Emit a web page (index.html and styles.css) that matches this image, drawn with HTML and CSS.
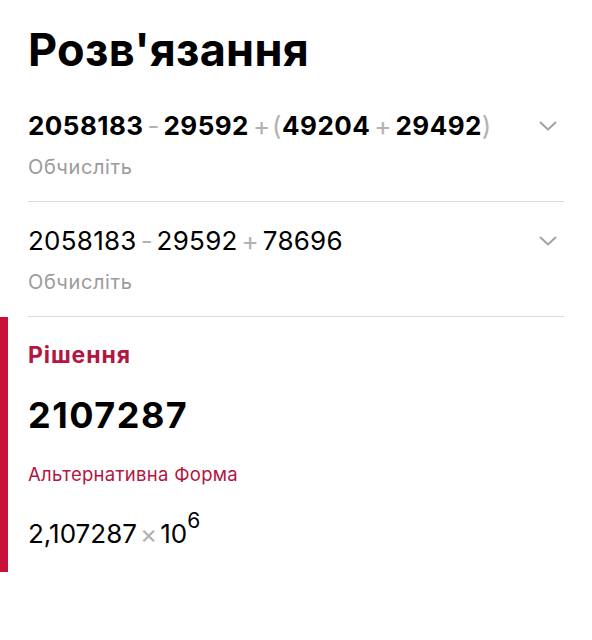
FILE: index.html
```html
<!DOCTYPE html>
<html lang="uk">
<head>
<meta charset="utf-8">
<title>Розв'язання</title>
<link rel="stylesheet" href="styles.css">
</head>
<body>
<main class="page">
  <h1 class="title">Розв'язання</h1>

  <section class="step">
    <div class="step-main">
      <div class="expr expr-bold">2058183<span class="op">-</span>29592<span class="op op-tight">+</span><span class="paren">(</span>49204<span class="op">+</span>29492<span class="paren">)</span></div>
      <div class="step-label">Обчисліть</div>
    </div>
    <svg class="chevron" width="18" height="10" viewBox="0 0 18 10"><path d="M1.5 1.5 L9 8.5 L16.5 1.5" fill="none" stroke="#a3a3a3" stroke-width="2" stroke-linecap="round" stroke-linejoin="round"/></svg>
  </section>

  <section class="step">
    <div class="step-main">
      <div class="expr">2058183<span class="op">-</span>29592<span class="op">+</span>78696</div>
      <div class="step-label">Обчисліть</div>
    </div>
    <svg class="chevron" width="18" height="10" viewBox="0 0 18 10"><path d="M1.5 1.5 L9 8.5 L16.5 1.5" fill="none" stroke="#a3a3a3" stroke-width="2" stroke-linecap="round" stroke-linejoin="round"/></svg>
  </section>

  <section class="solution">
    <div class="solution-head">Рішення</div>
    <div class="solution-value">2107287</div>
    <div class="alt-head">Альтернативна Форма</div>
    <div class="alt-value">2,107287<span class="op times">×</span>10<sup class="exp">6</sup></div>
  </section>
</main>
</body>
</html>
```
FILE: styles.css
```css
* { box-sizing: border-box; }
html, body { margin: 0; padding: 0; background: #fff; }
body {
  font-family: Inter, "Noto Sans", "Liberation Sans", sans-serif;
  color: #000;
}
.page {
  width: 592px;
  padding-top: 23px;
}
.title {
  margin: 0 0 10px 28px;
  font-size: 45px;
  line-height: 54px;
  font-weight: 700;
  letter-spacing: 0.3px;
}
.step {
  margin: 0 28px;
  padding: 23px 0 22px;
  border-bottom: 1px solid #dcdcdc;
  display: flex;
  justify-content: space-between;
  align-items: flex-start;
}
.step-main { display: flex; flex-direction: column; gap: 13px; }
.expr {
  font-size: 26px;
  line-height: 32px;
  font-weight: 400;
  letter-spacing: 0.25px;
  white-space: nowrap;
}
.expr-bold { font-weight: 700; letter-spacing: 0.45px; }
.op {
  color: #b2b2b2;
  font-weight: 400;
  margin: 0 4px;
  letter-spacing: 0;
}
.op-tight { margin-right: 2px; }
.paren {
  color: #b2b2b2;
  font-weight: 400;
}
.step-label {
  font-size: 20px;
  line-height: 24px;
  letter-spacing: 0.6px;
  color: #9b9b9b;
}
.chevron {
  margin-top: 11px;
  margin-right: 7px;
  flex: none;
}
.solution {
  border-left: 8px solid #c8103a;
  padding: 24px 28px 22px 20px;
}
.solution-head {
  font-size: 23px;
  line-height: 28px;
  font-weight: 700;
  letter-spacing: 0.9px;
  color: #b3163f;
}
.solution-value {
  margin-top: 24px;
  font-size: 36px;
  line-height: 44px;
  font-weight: 700;
  letter-spacing: 1.5px;
}
.alt-head {
  margin-top: 25px;
  font-size: 18.5px;
  line-height: 24px;
  letter-spacing: 0.3px;
  color: #b3163f;
}
.alt-value {
  margin-top: 32px;
  font-size: 26px;
  line-height: 32px;
}
.times { margin: 0 3px; }
.exp {
  font-size: 21px;
  line-height: 0;
  vertical-align: 15px;
  margin-left: 0;
}
```
